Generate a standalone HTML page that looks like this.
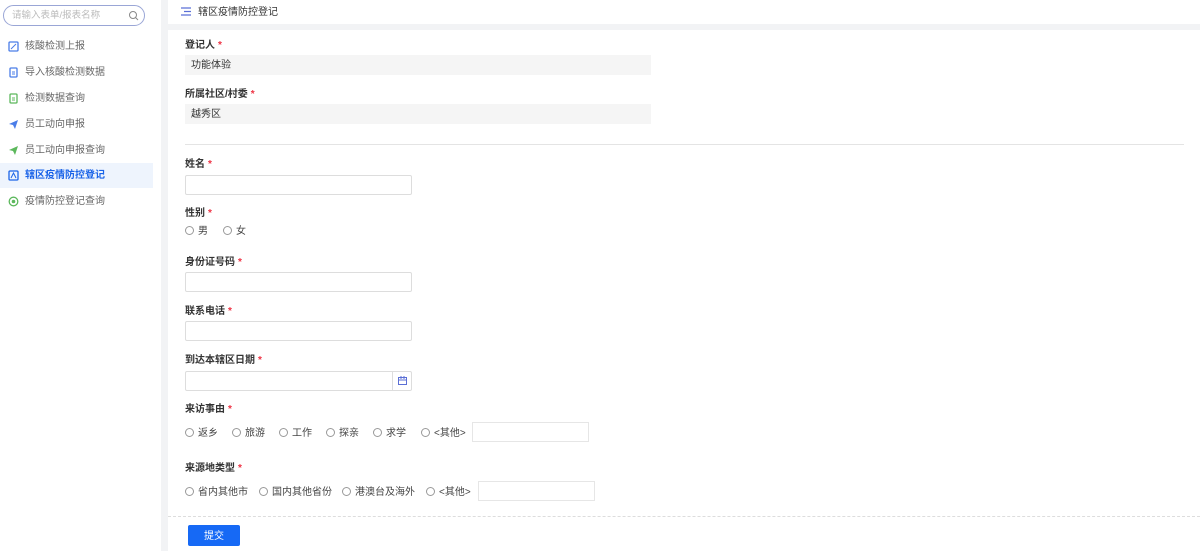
<!DOCTYPE html>
<html><head><meta charset="utf-8"><style>
*{box-sizing:border-box;margin:0;padding:0}
body{width:1200px;height:551px;overflow:hidden;background:#f2f3f5;font-family:"Liberation Sans","Noto Sans CJK SC",sans-serif;font-size:10px;line-height:17px;color:#333;position:relative}
.side{position:absolute;left:0;top:0;width:161px;height:551px;background:#fff}
.search{position:absolute;left:3px;top:5px;width:142px;height:21px;border:1px solid #9aa6d6;border-radius:11px;color:#bbb;font-size:9.5px;padding:1px 0 0 8px}
.search svg{position:absolute;right:5px;top:4px}
.mi{position:absolute;left:0;width:153px;height:25px;padding:4px 0 0 25px;color:#666;font-size:10px}
.mi.act{background:#eef4fd;color:#1b64e8;font-weight:bold}
.mi svg{position:absolute;left:8px;top:7px}
.head{position:absolute;left:168px;top:0;width:1032px;height:24px;background:#fff;font-size:10px;color:#333;padding:4px 0 0 30px}
.main{position:absolute;left:168px;top:30px;width:1032px;height:521px;background:#fff}
.lbl{position:absolute;left:17px;font-size:10px;font-weight:bold;color:#333}
.lbl i{color:#e34;font-style:normal;margin-left:3px}
.ro{position:absolute;left:17px;width:466px;height:20px;background:#f5f5f5;padding:2px 0 0 6px;font-size:10px}
.in{position:absolute;left:17px;width:227px;height:20px;border:1px solid #ddd;border-radius:2px}
.rad{position:absolute;font-size:10px;color:#444}
.rad b{display:inline-block;width:9px;height:9px;border:1px solid #999;border-radius:50%;vertical-align:-1px;margin-right:4px}
.sm{position:absolute;width:117px;height:20px;border:1px solid #e6e6e6}
.btn{position:absolute;left:20px;top:495px;width:52px;height:21px;background:#1669f5;color:#fff;border-radius:2px;text-align:center;padding-top:3px;font-size:10px}
</style></head><body>
<div class="side">
<div class="search">请输入表单/报表名称<svg width="11" height="11" viewBox="0 0 11 11"><circle cx="5" cy="5" r="3.5" stroke="#888" fill="none"/><path d="M7.5 7.5L10 10" stroke="#888"/></svg></div>
<div class="mi" style="top:34px"><svg width="11" height="11"><rect x="1" y="1" width="9" height="9" rx="1" fill="none" stroke="#4a7de8" stroke-width="1.3"/><path d="M3 8L8 3" stroke="#4a7de8"/></svg>核酸检测上报</div>
<div class="mi" style="top:60px"><svg width="11" height="11"><rect x="2" y="1" width="7" height="9" rx="1" fill="none" stroke="#4a7de8" stroke-width="1.3"/><path d="M4 5h3M4 7h3" stroke="#4a7de8"/></svg>导入核酸检测数据</div>
<div class="mi" style="top:86px"><svg width="11" height="11"><rect x="2" y="1" width="7" height="9" rx="1" fill="none" stroke="#5cb85c" stroke-width="1.3"/><path d="M4 5h3M4 7h3" stroke="#5cb85c"/></svg>检测数据查询</div>
<div class="mi" style="top:112px"><svg width="11" height="11"><path d="M1 5L10 1L7 10L5 6Z" fill="#4a7de8"/></svg>员工动向申报</div>
<div class="mi" style="top:138px"><svg width="11" height="11"><path d="M1 5L10 1L7 10L5 6Z" fill="#5cb85c"/></svg>员工动向申报查询</div>
<div class="mi act" style="top:163px"><svg width="11" height="11"><rect x="1" y="1" width="9" height="9" rx="1" fill="none" stroke="#1b64e8" stroke-width="1.3"/><path d="M3 8L5.5 3L8 8" stroke="#1b64e8" fill="none"/></svg>辖区疫情防控登记</div>
<div class="mi" style="top:189px"><svg width="11" height="11"><circle cx="5.5" cy="5.5" r="4.3" fill="none" stroke="#5cb85c" stroke-width="1.3"/><circle cx="5.5" cy="5.5" r="1.8" fill="#5cb85c"/></svg>疫情防控登记查询</div>
</div>
<div class="head"><svg style="position:absolute;left:13px;top:7px" width="10" height="9"><path d="M0 1h10M3 4.5h7M0 8h10" stroke="#5b6fd6" stroke-width="1.2"/></svg>辖区疫情防控登记</div>
<div class="main">
<div class="lbl" style="top:7px">登记人<i>*</i></div>
<div class="ro" style="top:25px">功能体验</div>
<div class="lbl" style="top:56px">所属社区/村委<i>*</i></div>
<div class="ro" style="top:74px">越秀区</div>
<div style="position:absolute;left:17px;top:114px;width:999px;border-top:1px solid #e4e4e4"></div>
<div class="lbl" style="top:126px">姓名<i>*</i></div>
<div class="in" style="top:145px"></div>
<div class="lbl" style="top:175px">性别<i>*</i></div>
<div class="rad" style="left:17px;top:193px"><b></b>男</div>
<div class="rad" style="left:55px;top:193px"><b></b>女</div>
<div class="lbl" style="top:224px">身份证号码<i>*</i></div>
<div class="in" style="top:242px"></div>
<div class="lbl" style="top:273px">联系电话<i>*</i></div>
<div class="in" style="top:291px"></div>
<div class="lbl" style="top:322px">到达本辖区日期<i>*</i></div>
<div class="in" style="top:341px"><div style="position:absolute;right:0;top:0;width:19px;height:18px;border-left:1px solid #ddd"><svg style="position:absolute;left:5px;top:4px" width="9" height="9"><rect x="0.5" y="1.5" width="8" height="7" fill="none" stroke="#5b6fd6"/><path d="M0.5 4h8M3 0v3M6 0v3" stroke="#5b6fd6"/></svg></div></div>
<div class="lbl" style="top:371px">来访事由<i>*</i></div>
<div class="rad" style="left:17px;top:395px"><b></b>返乡</div>
<div class="rad" style="left:64px;top:395px"><b></b>旅游</div>
<div class="rad" style="left:111px;top:395px"><b></b>工作</div>
<div class="rad" style="left:158px;top:395px"><b></b>探亲</div>
<div class="rad" style="left:205px;top:395px"><b></b>求学</div>
<div class="rad" style="left:253px;top:395px"><b></b>&lt;其他&gt;</div>
<div class="sm" style="left:304px;top:392px"></div>
<div class="lbl" style="top:430px">来源地类型<i>*</i></div>
<div class="rad" style="left:17px;top:454px"><b></b>省内其他市</div>
<div class="rad" style="left:91px;top:454px"><b></b>国内其他省份</div>
<div class="rad" style="left:174px;top:454px"><b></b>港澳台及海外</div>
<div class="rad" style="left:258px;top:454px"><b></b>&lt;其他&gt;</div>
<div class="sm" style="left:310px;top:451px"></div>
<div style="position:absolute;left:0;top:486px;width:1032px;border-top:1px dashed #ddd"></div>
<div class="btn">提交</div>
</div>
</body></html>
